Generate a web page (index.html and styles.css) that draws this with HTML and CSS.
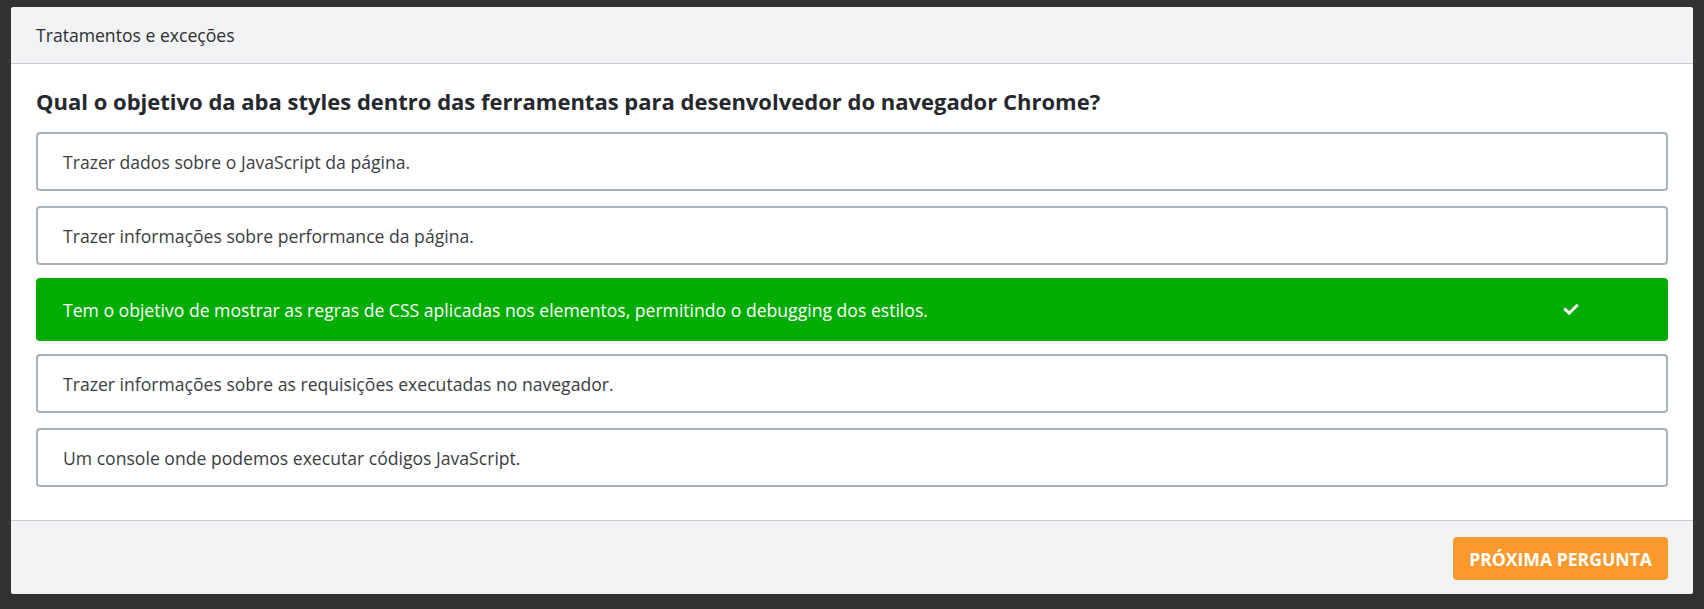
FILE: index.html
```html
<!DOCTYPE html>
<html lang="pt-BR">
<head>
<meta charset="utf-8">
<title>Tratamentos e exceções</title>
<link rel="stylesheet" href="styles.css">
</head>
<body>
<div class="card">
  <div class="card-header">Tratamentos e exceções</div>
  <div class="card-body">
    <h2 class="question">Qual o objetivo da aba styles dentro das ferramentas para desenvolvedor do navegador Chrome?</h2>
    <div class="options">
      <div class="option">Trazer dados sobre o JavaScript da página.</div>
      <div class="option">Trazer informações sobre performance da página.</div>
      <div class="option option-correct">
        <span>Tem o objetivo de mostrar as regras de CSS aplicadas nos elementos, permitindo o debugging dos estilos.</span>
        <svg class="check" viewBox="0 0 512 512" width="18" height="15" aria-hidden="true"><path fill="#fff" d="M173.9 439.4l-166.4-166.4c-10-10-10-26.2 0-36.2l36.2-36.2c10-10 26.2-10 36.2 0L192 312.7 432.1 72.6c10-10 26.2-10 36.2 0l36.2 36.2c10 10 10 26.2 0 36.2l-294.4 294.4c-10 10-26.2 10-36.2 0z"/></svg>
      </div>
      <div class="option">Trazer informações sobre as requisições executadas no navegador.</div>
      <div class="option">Um console onde podemos executar códigos JavaScript.</div>
    </div>
  </div>
  <div class="card-footer">
    <button class="btn-next">Próxima pergunta</button>
  </div>
</div>
</body>
</html>
```
FILE: styles.css
```css
html, body {
  margin: 0;
  background: #323232;
}
body {
  padding: 7px 11px 14px 11px;
  font-family: "Open Sans", "Liberation Sans", sans-serif;
  color: #333;
}
.card {
  background: #fff;
  border-radius: 3px;
  overflow: hidden;
}
.card-header {
  height: 56px;
  display: flex;
  align-items: center;
  padding-left: 25px;
  background: #f2f3f5;
  border-bottom: 1px solid #c9cdd2;
  font-size: 17.6px;
  color: #2b2f33;
}
.card-body {
  padding: 24px 25px 33px 25px;
}
.question {
  margin: 0 0 18px 0;
  font-size: 22px;
  line-height: 26px;
  font-weight: 700;
  color: #25292d;
}
.options {
  display: flex;
  flex-direction: column;
  gap: 15px;
}
.option {
  height: 59px;
  box-sizing: border-box;
  border: 2px solid #a9b1b9;
  border-radius: 4px;
  padding: 0 25px;
  display: flex;
  align-items: center;
  font-size: 17.6px;
  color: #3a3e42;
}
.option-correct {
  height: 63px;
  margin: -2px 0;
  border: none;
  background: #00ad00;
  color: #fff;
  justify-content: space-between;
  padding: 0 88px 0 27px;
}
.check {
  display: block;
}
.card-footer {
  border-top: 1px solid #c9cdd2;
  background: #f2f3f5;
  height: 74px;
  box-sizing: border-box;
  padding: 16px 25px 0 0;
  display: flex;
  justify-content: flex-end;
  align-items: flex-start;
}
.btn-next {
  width: 215px;
  height: 43px;
  border: none;
  border-radius: 4px;
  background: #fb992c;
  color: #fff;
  font-family: "Open Sans", "Liberation Sans", sans-serif;
  font-weight: 700;
  font-size: 17.6px;
  text-transform: uppercase;
  padding: 0;
}
```
